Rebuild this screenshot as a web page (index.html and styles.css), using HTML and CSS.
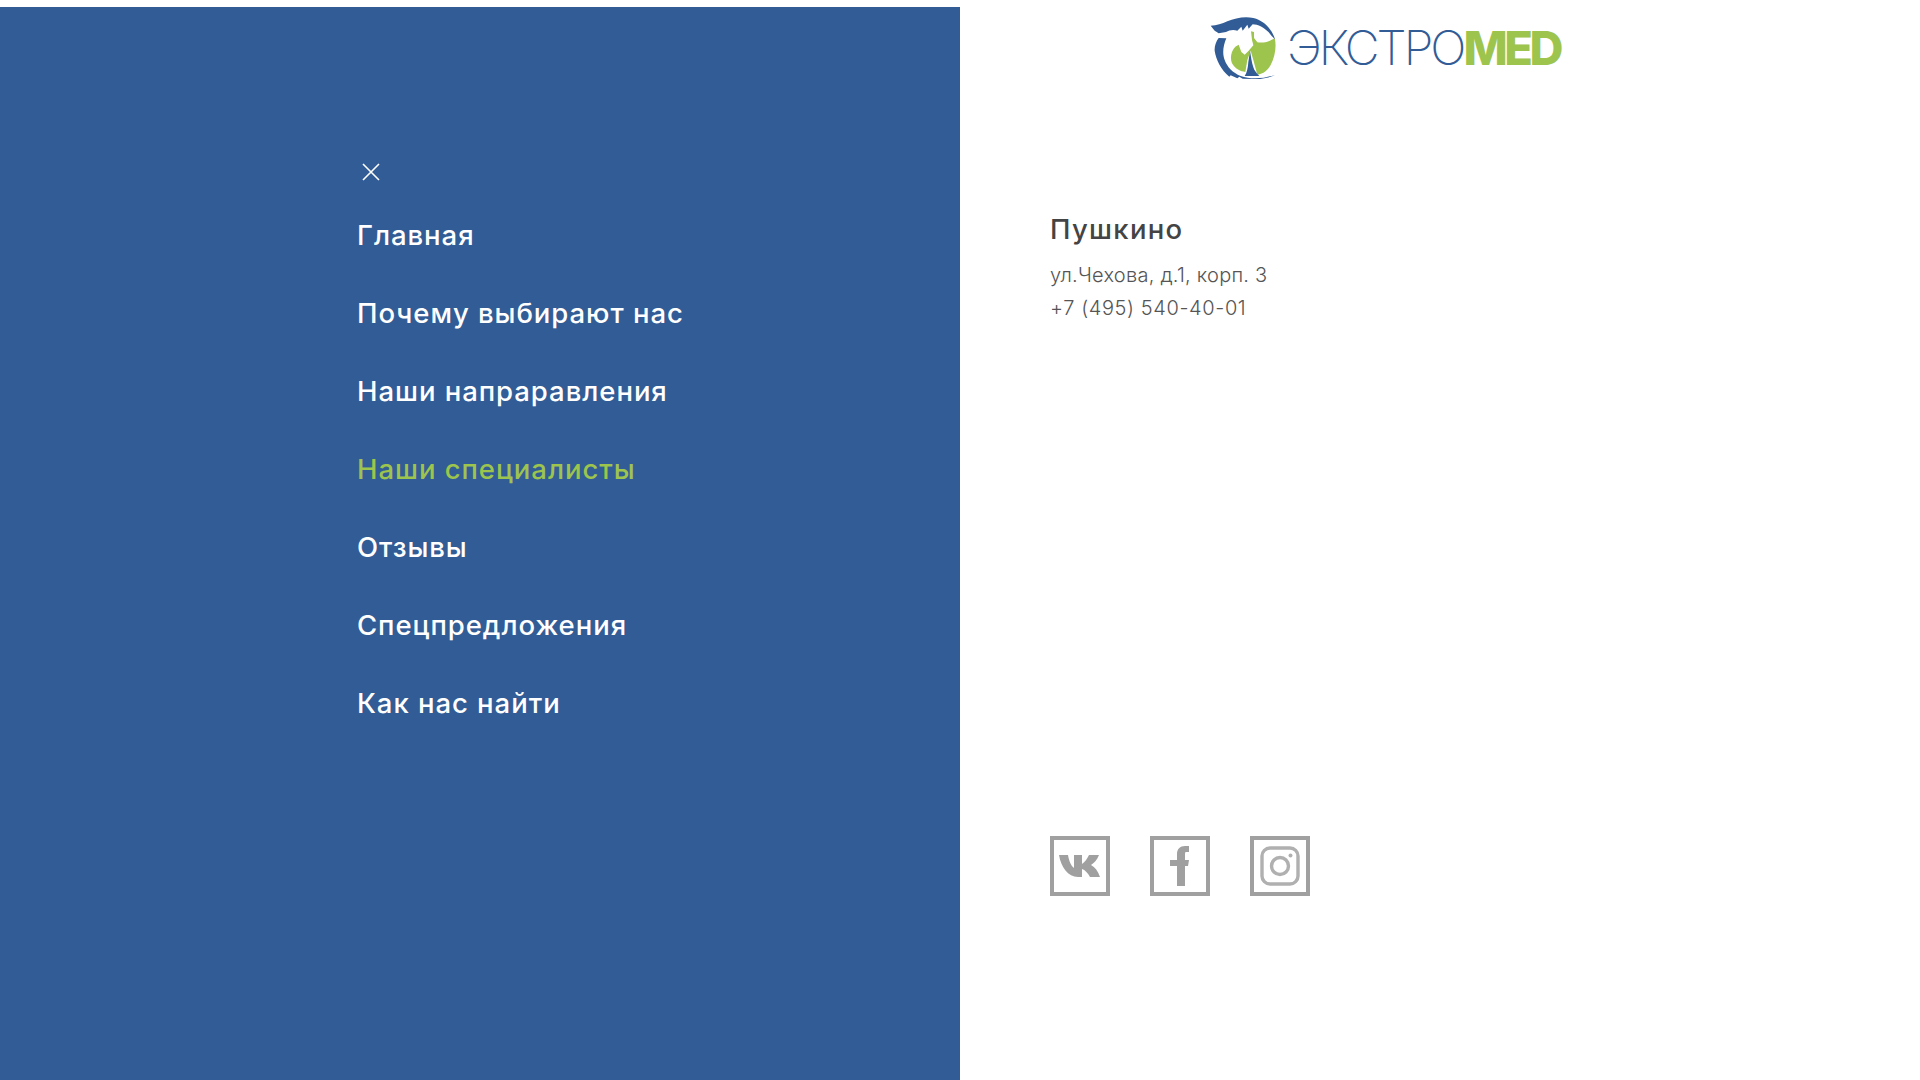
FILE: index.html
```html
<html>
<head>
<meta charset="utf-8">
<link rel="stylesheet" href="styles.css">
</head>
<body>
	<div class="page">
		<div class="menu">
			<button class="close">
				<svg width="20" height="20" viewBox="0 0 20 20"><path d="M2 2L18 18M18 2L2 18" stroke="#fff" stroke-width="1.6" fill="none"/></svg>
			</button>
			<a class="item">Главная</a>
			<a class="item">Почему выбирают нас</a>
			<a class="item">Наши напраравления</a>
			<a class="item active">Наши специалисты</a>
			<a class="item">Отзывы</a>
			<a class="item">Спецпредложения</a>
			<a class="item">Как нас найти</a>
		</div>
		<div class="side">
			<div class="logo">
				<svg width="90" height="80" viewBox="0 0 270 240">
					<path fill="#9dc44d" d="M153 64L162 66L162 84L172 97C190 100 208 95 224 84C230 105 226 140 212 165C204 180 190 192 172 194L160 150L152 122L142 150L136 186C122 184 106 178 96 160C90 145 92 125 106 110L116 104L124 126L134 134L146 122L160 106L156 90Z"/>
					<path fill="#325c96" d="M32 47C50 46 66 42 82 34C105 24 135 18 160 24C190 31 215 55 225 88L215 78C205 62 188 50 170 44L158 43L146 56L142 44L128 62L124 50L112 62C100 58 88 60 78 66L56 70L44 62Z"/>
					<path fill="#325c96" d="M56 84L79 85C70 105 66 130 74 150C82 172 98 188 122 198C150 208 190 208 226 194C208 204 185 208 160 207L128 206L118 200L112 205L92 196L88 200C64 180 48 150 44 122C43 108 48 95 56 84Z"/>
					<path fill="#325c96" d="M150 124C153 140 155 158 160 172C163 182 170 190 178 198L134 198C141 188 144 172 145 156Z"/>
				</svg>
				<span class="logo-text"><span class="logo-thin">ЭКСТРО</span><span class="logo-bold">MED</span></span>
			</div>
			<div class="contacts">
				<h2 class="city">Пушкино</h2>
				<p class="line">ул.Чехова, д.1, корп. 3</p>
				<p class="line phone">+7 (495) 540-40-01</p>
			</div>
			<div class="socials">
				<a class="social">
					<svg width="42" height="26" viewBox="0 0 42 26"><path fill="#a0a0a0" d="M0 2L9 2C10 8 12 13 15 15L15 2L23 2L23 11C26 9 28 6 30 2L40 2C38 7 35 10 32 12C36 14 39 18 41 24L31 24C29 20 26 17 23 16L23 24L19 24C9 24 2 14 0 2Z"/></svg>
				</a>
				<a class="social">
					<svg width="20" height="40" viewBox="0 0 20 40"><path fill="#a0a0a0" d="M7 40L7 20L0 20L0 14L7 14L7 8C7 3 10 0 15 0L19 0L19 6L16 6C15 6 15 7 15 9L15 14L19 14L18 20L15 20L15 40Z"/></svg>
				</a>
				<a class="social">
					<svg width="40" height="40" viewBox="0 0 40 40" fill="none" stroke="#b0b0b0" stroke-width="3.4"><rect x="2" y="2" width="36" height="36" rx="8"/><circle cx="20" cy="20" r="8.5"/><circle cx="30.5" cy="9.5" r="2" fill="#b0b0b0" stroke="none"/></svg>
				</a>
			</div>
		</div>
	</div>
</body>
</html>
```

FILE: styles.css
```css
body {
    margin: 0;
    background: #fff;
    font-family: "Inter", "Liberation Sans", sans-serif;
}
.page {
    display: flex;
    height: 1073px;
    margin-top: 7px;
    overflow: hidden;
}
.menu {
    width: 960px;
    background: #325c96;
    padding: 155px 0 0 357px;
    box-sizing: border-box;
    display: flex;
    flex-direction: column;
    align-items: flex-start;
}
.close {
    background: none;
    border: none;
    padding: 0;
    margin: 0 0 37px 4px;
    height: 20px;
    display: block;
}
.item {
    font-size: 27.5px;
    font-weight: 500;
    letter-spacing: 0.95px;
    line-height: 32px;
    color: #fff;
    margin-bottom: 46px;
}
.active {
    color: #9dc44d;
}
.side {
    flex: 1;
    padding-left: 90px;
    display: flex;
    flex-direction: column;
}
.logo {
    display: flex;
    align-items: flex-start;
    margin: 3px 0 0 150px;
    height: 80px;
}
.logo-text {
    margin: 13px 0 0 -3px;
    font-size: 48px;
    line-height: 50px;
    white-space: nowrap;
}
.logo-thin {
    color: #325c96;
    font-weight: 200;
    letter-spacing: -3px;
}
.logo-bold {
    color: #9dc44d;
    font-size: 47px;
    font-weight: 800;
    letter-spacing: -3.5px;
}
.contacts {
    margin-top: 123px;
}
.city {
    margin: 0 0 14px;
    font-size: 27.5px;
    line-height: 32px;
    font-weight: 500;
    letter-spacing: 1.3px;
    color: #444;
}
.line {
    margin: 0;
    font-size: 20px;
    line-height: 33px;
    font-weight: 300;
    letter-spacing: 0.24px;
    color: #555;
}
.phone {
    letter-spacing: 0.6px;
}
.socials {
    display: flex;
    gap: 40px;
    margin-top: 511px;
}
.social {
    width: 60px;
    height: 60px;
    box-sizing: border-box;
    border: 4px solid #a0a0a0;
    display: flex;
    align-items: center;
    justify-content: center;
}
```
